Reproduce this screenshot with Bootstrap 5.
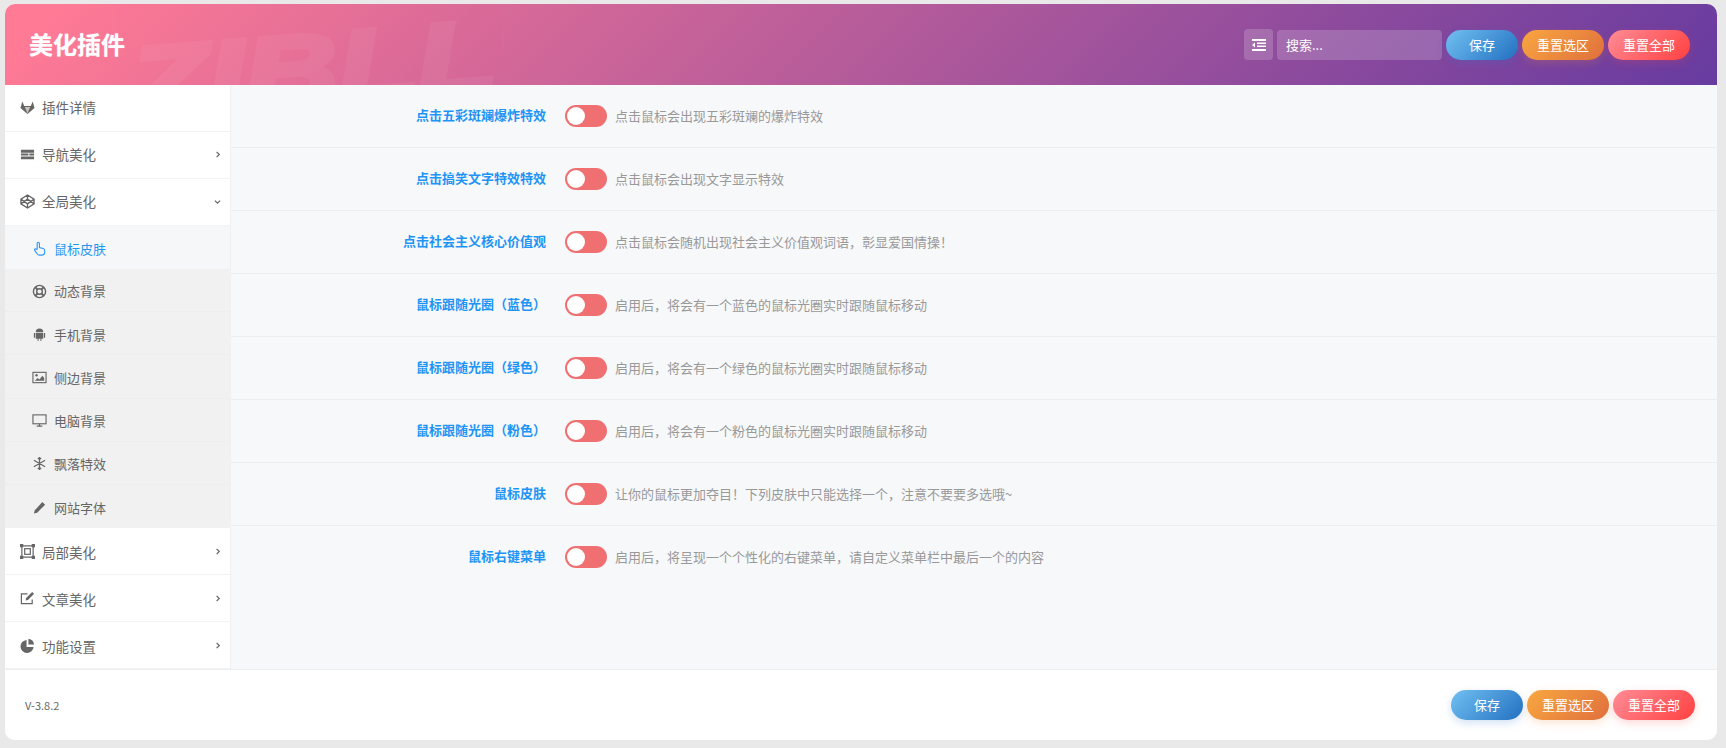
<!DOCTYPE html>
<html lang="zh"><head><meta charset="utf-8"><title>美化插件</title>
<link href="https://cdn.jsdelivr.net/npm/bootstrap@5.3.0/dist/css/bootstrap.min.css" rel="stylesheet">
<style>
html,body{height:100%}
body{background:#e9e9e9;font-family:"Noto Sans CJK SC","Liberation Sans",sans-serif;font-size:13px;color:#555;overflow:hidden}
.shell{position:absolute;left:5px;top:4px;width:1712px;height:736px;background:#fff;border-radius:10px;overflow:hidden;display:flex;flex-direction:column}
.topbar{height:81px;flex:none;position:relative;overflow:hidden;background:linear-gradient(135deg,#ff7a95 0%,#ff7a95 3%,#673ba0 100%);padding:0 27px 0 24px}
.brand{font-size:24px;font-weight:700;color:#fff;position:relative;margin:0;text-shadow:0 0 1px rgba(255,255,255,.6)}
.wmark{position:absolute;left:120px;top:29px;font:italic 700 100px/1 "Liberation Sans",sans-serif;-webkit-text-stroke:5px #fff;color:#fff;opacity:.05;transform:rotate(-4.5deg) scaleX(1.3);transform-origin:left top;white-space:nowrap}
.tools{position:relative}
.tool-icon{width:29px;height:31px;background:rgba(255,255,255,.18);border-radius:4px}
.search{width:165px;height:30px;background:rgba(255,255,255,.18);border-radius:4px;color:#fff;font-size:13px;padding:0 9px;line-height:30px;margin-right:4px}
.pill{height:30px;border:0;border-radius:15px;color:#fff;font-size:13px;line-height:30px;padding:0;text-align:center}
.p-blue{width:72px;background:linear-gradient(135deg,#72c0f2,#2270c0);box-shadow:0 3px 9px rgba(50,120,210,.22);margin-right:4px}
.p-orange{width:82px;background:linear-gradient(135deg,#f8a740,#e0703d);box-shadow:0 3px 9px rgba(240,130,50,.22);margin-right:4px}
.p-red{width:82px;background:linear-gradient(135deg,#ff8c96,#ff4040);box-shadow:0 3px 9px rgba(250,70,70,.22)}
.bodyrow{flex:1;min-height:0;display:flex}
.side{width:226px;flex:none;background:#fff;border-right:1px solid #f0f0f0}
.m-item{height:47px;display:flex;align-items:center;padding:0 9px 1px 15px;border-bottom:1px solid #f3f3f3;color:#666;font-size:13.5px}
.m-low{padding-top:2px;padding-bottom:0}
.m-item svg{width:15px;height:15px;margin-right:7px;flex:none}
.chev{margin-left:auto;font-size:0}
.m-item .chev svg{width:7px;height:7px;margin:0}
.subs{background:#f1f1f1}
.s-item{height:43.14px;display:flex;align-items:center;padding-left:27px;padding-top:2px;border-bottom:1px dotted #ebebeb;color:#666;font-size:13px}
.s-item svg{width:15px;height:15px;margin-right:7px;flex:none}
.s-on{background:#f6f7f9;color:#1f96f0;border-bottom:0}
.s-end{border-bottom:0}
.main{flex:1;background:#f7f8fa}
.setrow{height:63px;display:flex;align-items:flex-start;border-bottom:1px solid #ecedef;padding-top:20px}
.setrow:last-child{border-bottom:0}
.lbl{width:315px;flex:none;text-align:right;font-weight:700;color:#1e94f5;font-size:13px;line-height:19px}
.tog{width:42px;height:22px;flex:none;margin-left:19px;border-radius:11px;background:#f07072;position:relative}
.tog::after{content:"";position:absolute;left:2px;top:2px;width:18px;height:18px;border-radius:50%;background:#fff}
.hint{margin-left:8px;color:#999;font-size:13px;line-height:21px}
.foot{height:71px;flex:none;border-top:1px solid #eceef0;padding:0 22px 0 20px;background:#fff}
.ver{font-size:11px;color:#666}
</style></head><body>
<div class="shell">
 <header class="topbar d-flex align-items-center justify-content-between">
  <div class="wmark">ZIBLL</div>
  <h1 class="brand">美化插件</h1>
  <div class="tools d-flex align-items-center">
   <div class="tool-icon d-flex align-items-center justify-content-center me-1"><svg width="14" height="12" viewBox="0 0 14 12"><path fill="#fff" d="M0 0h14v2H0zM5 3.5h9v1.5H5zM5 6.5h9V8H5zM0 10h14v2H0zM3 3.5v5L0 6z"/></svg></div>
   <div class="search">搜索...</div>
   <div class="pill p-blue">保存</div>
   <div class="pill p-orange">重置选区</div>
   <div class="pill p-red">重置全部</div>
  </div>
 </header>
 <div class="bodyrow">
  <nav class="side">
   <div class="m-item"><svg viewBox="0 0 16 16" fill="#666"><path d="M2.500 1.500L4.500 6.500H11.500L13.500 1.500L15.500 8.500L8 15L.5 8.500z"/><path fill="#c9c4bd" d="M5.200 7.500L8 14.500 10.800 7.500z"/></svg>插件详情</div>
   <div class="m-item"><svg viewBox="0 0 16 16" fill="#666"><path d="M1 3h14v3H1zM1 7h8v2H1zM10 7h5v2h-5zM1 10h14v3H1z"/></svg>导航美化<span class="chev"><svg viewBox="0 0 8 8"><path d="M3 1l3 3-3 3" fill="none" stroke="#666" stroke-width="1.4"/></svg></span></div>
   <div class="m-item"><svg viewBox="0 0 16 16" fill="none" stroke="#666" stroke-width="1.4"><path d="M8 1l7 4.500v5L8 15l-7-4.500v-5zM1 5.500L8 10.500 15 5.500M1 10.500L8 5.500 15 10.500M8 1v4.500M8 10.500V15"/></svg>全局美化<span class="chev"><svg viewBox="0 0 8 8"><path d="M1 3l3 3 3-3" fill="none" stroke="#666" stroke-width="1.4"/></svg></span></div>
   <div class="subs">
    <div class="s-item s-on"><svg viewBox="0 0 16 16" fill="none" stroke="#2b9af3" stroke-width="1.2"><path d="M5.500 9V2.500a1.200 1.200 0 0 1 2.400 0V7l4 1c1 .3 1.600 1 1.600 2v2c0 2-1.500 3-3 3H8c-1.500 0-2.200-.7-3-2L2.800 9.800c-.6-1 .7-2 1.500-1.300z"/></svg>鼠标皮肤</div>
    <div class="s-item"><svg viewBox="0 0 16 16" fill="none" stroke="#666"><circle cx="8" cy="8" r="6.500" stroke-width="1.500"/><circle cx="8" cy="8" r="3" stroke-width="1.500"/><path stroke-width="2.200" d="M3.500 3.500l2.500 2.500M12.500 3.500L10 6M3.500 12.500L6 10M12.500 12.500L10 10"/></svg>动态背景</div>
    <div class="s-item"><svg viewBox="0 0 16 16" fill="#666"><path d="M4 5.500a4 4 0 0 1 8 0zM4 6.500h8v6H10v2.500H9v-2.500H7v2.500H6v-2.500H4zM2 6.500h1.300v5H2zM12.700 6.500H14v5h-1.300z"/></svg>手机背景</div>
    <div class="s-item"><svg viewBox="0 0 16 16"><rect x="1" y="2.500" width="14" height="11" fill="none" stroke="#666" stroke-width="1.200"/><path fill="#666" d="M3 11.500l3-3 2 1.500 3-4 2 2.500v3z"/><circle cx="4.800" cy="5.500" r="1.300" fill="#666"/></svg>侧边背景</div>
    <div class="s-item"><svg viewBox="0 0 16 16" fill="none" stroke="#666" stroke-width="1.200"><rect x="1" y="2" width="14" height="9.500"/><path d="M8 11.500V14M5 14h6"/></svg>电脑背景</div>
    <div class="s-item"><svg viewBox="0 0 16 16" fill="none" stroke="#666" stroke-width="1.300"><path d="M8 1v14M2 4.500l12 7M14 4.500l-12 7M6.200 2l1.800 1.800L9.800 2M6.200 14l1.800-1.800 1.800 1.800"/></svg>飘落特效</div>
    <div class="s-item s-end"><svg viewBox="0 0 16 16" fill="#666"><path d="M11 2l3 3-8.500 8.500L2 14.500l1-3.500z"/></svg>网站字体</div>
   </div>
   <div class="m-item m-low"><svg viewBox="0 0 16 16" fill="none" stroke="#666" stroke-width="1.300"><path d="M2 2h12v12H2z"/><rect x="5" y="5" width="6" height="6"/><path fill="#666" stroke="none" d="M0 0h3.500v3.500H0zM12.500 0H16v3.500h-3.500zM0 12.500h3.500V16H0zM12.500 12.500H16V16h-3.500z"/></svg>局部美化<span class="chev"><svg viewBox="0 0 8 8"><path d="M3 1l3 3-3 3" fill="none" stroke="#666" stroke-width="1.400"/></svg></span></div>
   <div class="m-item m-low"><svg viewBox="0 0 16 16" fill="none" stroke="#666" stroke-width="1.300"><path d="M13 9v4.500H1.500V3H8"/><path fill="#666" stroke="none" d="M13 1l2 2-6.500 6.500-2.500.5.500-2.500z"/></svg>文章美化<span class="chev"><svg viewBox="0 0 8 8"><path d="M3 1l3 3-3 3" fill="none" stroke="#666" stroke-width="1.400"/></svg></span></div>
   <div class="m-item m-low"><svg viewBox="0 0 16 16" fill="#666"><path d="M7 2v7.500h7.500A7 7 0 1 1 7 2z"/><path d="M9 .8A7 7 0 0 1 15 7H9z"/></svg>功能设置<span class="chev"><svg viewBox="0 0 8 8"><path d="M3 1l3 3-3 3" fill="none" stroke="#666" stroke-width="1.400"/></svg></span></div>
  </nav>
  <main class="main">
   <div class="setrow"><div class="lbl">点击五彩斑斓爆炸特效</div><div class="tog"></div><div class="hint">点击鼠标会出现五彩斑斓的爆炸特效</div></div>
   <div class="setrow"><div class="lbl">点击搞笑文字特效特效</div><div class="tog"></div><div class="hint">点击鼠标会出现文字显示特效</div></div>
   <div class="setrow"><div class="lbl">点击社会主义核心价值观</div><div class="tog"></div><div class="hint">点击鼠标会随机出现社会主义价值观词语，彰显爱国情操！</div></div>
   <div class="setrow"><div class="lbl">鼠标跟随光圈（蓝色）</div><div class="tog"></div><div class="hint">启用后，将会有一个蓝色的鼠标光圈实时跟随鼠标移动</div></div>
   <div class="setrow"><div class="lbl">鼠标跟随光圈（绿色）</div><div class="tog"></div><div class="hint">启用后，将会有一个绿色的鼠标光圈实时跟随鼠标移动</div></div>
   <div class="setrow"><div class="lbl">鼠标跟随光圈（粉色）</div><div class="tog"></div><div class="hint">启用后，将会有一个粉色的鼠标光圈实时跟随鼠标移动</div></div>
   <div class="setrow"><div class="lbl">鼠标皮肤</div><div class="tog"></div><div class="hint">让你的鼠标更加夺目！下列皮肤中只能选择一个，注意不要要多选哦~</div></div>
   <div class="setrow"><div class="lbl">鼠标右键菜单</div><div class="tog"></div><div class="hint">启用后，将呈现一个个性化的右键菜单，请自定义菜单栏中最后一个的内容</div></div>
  </main>
 </div>
 <footer class="foot d-flex align-items-center justify-content-between">
  <div class="ver">V-3.8.2</div>
  <div class="d-flex">
   <div class="pill p-blue">保存</div>
   <div class="pill p-orange">重置选区</div>
   <div class="pill p-red">重置全部</div>
  </div>
 </footer>
</div>
</body></html>
